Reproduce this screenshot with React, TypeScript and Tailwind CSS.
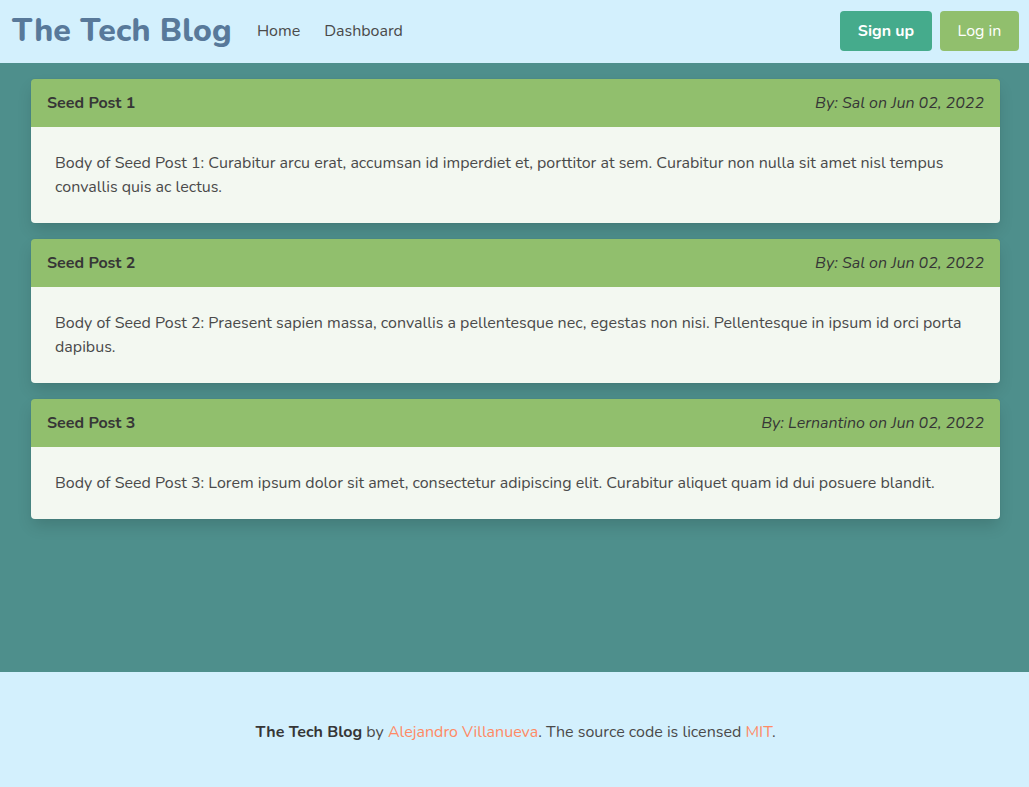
const posts = [
  {
    title: 'Seed Post 1',
    author: 'Sal',
    date: 'Jun 02, 2022',
    body: 'Body of Seed Post 1: Curabitur arcu erat, accumsan id imperdiet et, porttitor at sem. Curabitur non nulla sit amet nisl tempus convallis quis ac lectus.',
  },
  {
    title: 'Seed Post 2',
    author: 'Sal',
    date: 'Jun 02, 2022',
    body: 'Body of Seed Post 2: Praesent sapien massa, convallis a pellentesque nec, egestas non nisi. Pellentesque in ipsum id orci porta dapibus.',
  },
  {
    title: 'Seed Post 3',
    author: 'Lernantino',
    date: 'Jun 02, 2022',
    body: 'Body of Seed Post 3: Lorem ipsum dolor sit amet, consectetur adipiscing elit. Curabitur aliquet quam id dui posuere blandit.',
  },
];

function PostCard({ post }: { post: (typeof posts)[number] }) {
  return (
    <article className="rounded-[4px] overflow-hidden shadow-[0_8px_16px_-2px_rgba(10,10,10,0.15),0_0_0_1px_rgba(10,10,10,0.02)]">
      <header className="flex items-center justify-between bg-[#91bf6d] h-12 px-4">
        <h3 className="font-bold text-[#363636]">{post.title}</h3>
        <span className="italic text-[#363636]">
          By: {post.author} on {post.date}
        </span>
      </header>
      <div className="bg-[#f3f8f1] px-6 py-6 leading-6 text-[#4a4a4a]">{post.body}</div>
    </article>
  );
}

export default function App() {
  return (
    <div className="min-h-screen flex flex-col text-[16px] text-[#4a4a4a] font-['Nunito','Lato',sans-serif]">
      <nav className="flex items-center justify-between h-[63px] bg-[#d3f0fd] pl-3 pr-[10px] pb-[2px]">
        <div className="flex items-center">
          <a className="text-[32px] font-extrabold text-[#58799a] tracking-[0.2px] mr-[25px]">The Tech Blog</a>
          <a className="mr-6 text-[#4a4a4a]">Home</a>
          <a className="text-[#4a4a4a]">Dashboard</a>
        </div>
        <div className="flex items-center gap-2">
          <button className="h-10 w-[92px] rounded-[4px] bg-[#45ab8c] text-white font-bold">Sign up</button>
          <button className="h-10 w-[79px] rounded-[4px] bg-[#91bf6d] text-white">Log in</button>
        </div>
      </nav>
      <main className="flex-1 bg-[#4e8f8c] pl-[31px] pr-[29px] pt-4 pb-8">
        <div className="flex flex-col gap-4">
          {posts.map(p => (
            <PostCard key={p.title} post={p} />
          ))}
        </div>
      </main>
      <footer className="bg-[#d3f0fd] h-[115px] flex items-center justify-center pt-[4px] pl-[2px]">
        <p>
          <strong className="text-[#363636]">The Tech Blog</strong> by{' '}
          <a className="text-[#ff8a65]">Alejandro Villanueva</a>. The source code is licensed{' '}
          <a className="text-[#ff8a65]">MIT</a>.
        </p>
      </footer>
    </div>
  );
}
